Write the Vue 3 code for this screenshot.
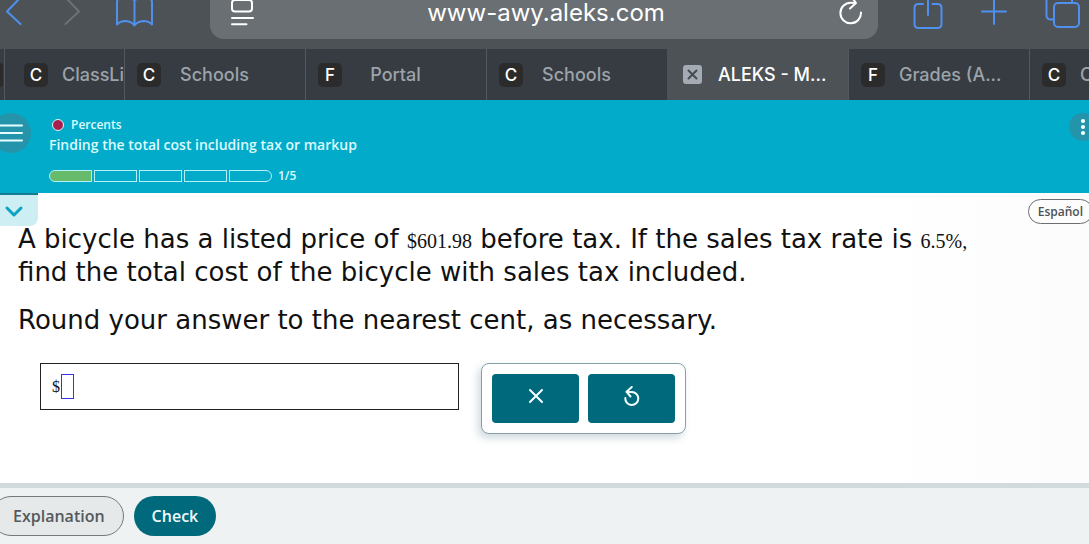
<script setup>
import { ref } from 'vue'

const tabs = [
  { letter: 'C', title: 'ClassLi', kind: 'clipped' },
  { letter: 'C', title: 'Schools', kind: 'centered' },
  { letter: 'F', title: 'Portal', kind: 'centered' },
  { letter: 'C', title: 'Schools', kind: 'centered' },
  { letter: '', title: 'ALEKS - M...', kind: 'active' },
  { letter: 'F', title: 'Grades (A...', kind: 'left' },
  { letter: 'C', title: 'C', kind: 'left' }
]
const total = 5
const done = 1
const answer = ref('')
</script>

<template>
  <div class="page">
    <div class="toolbar">
      <div class="nav">
        <button class="tool" aria-label="Back">
          <svg width="30" height="40" viewBox="0 0 30 40"><path d="M21-3 7 11.500 20.500 24" class="blue" /></svg>
        </button>
        <button class="tool" aria-label="Forward" disabled>
          <svg width="30" height="40" viewBox="0 0 30 40"><path d="M8-3 22 11.500 8.500 24" class="dim" /></svg>
        </button>
        <button class="tool book" aria-label="Bookmarks">
          <svg width="40" height="40" viewBox="0 0 40 40"><path d="M3 24.500V2Q3-2 8-2q8 0 12.500 2Q25-2 31-2q7 0 7 4v22.500Q35 21 29.500 21 23 21.500 20.500 25.500 18 21.500 11.500 21 6 21 3 24.500ZM20.500 0v25" class="blue" /></svg>
        </button>
      </div>
      <div class="address">
        <button class="tool" aria-label="Page settings">
          <svg width="24" height="30" viewBox="0 0 24 30"><rect x="2" y="0" width="20" height="11.500" rx="3" class="white" /><path d="M2 18h21M2 24.200h14.500" class="white" /></svg>
        </button>
        <span class="url">www-awy.aleks.com</span>
        <button class="tool" aria-label="Reload">
          <svg width="26" height="30" viewBox="0 0 26 30"><path d="M23 12.500A10.300 10.300 0 1 1 12.700 2.700q2.500 0 5 .3M12 8.500 18 3 13.500-3" class="white" /></svg>
        </button>
      </div>
      <div class="actions">
        <button class="tool" aria-label="Share">
          <svg width="32" height="40" viewBox="0 0 32 40"><path d="M11 4H6.500Q2.500 4 2.500 8V24Q2.500 28 6.500 28H25.500Q29.500 28 29.500 24V8Q29.500 4 25.500 4H20.500M16-4V15" class="blue" /></svg>
        </button>
        <button class="tool" aria-label="New tab">
          <svg width="32" height="40" viewBox="0 0 32 40"><path d="M4 11.500h24M16-2v26" class="blue" /></svg>
        </button>
        <button class="tool last" aria-label="Tab overview">
          <svg width="40" height="40" viewBox="0 0 40 40"><rect x="10" y="3" width="25" height="24" rx="4" class="blue" /><path d="M2.500-4V15.500Q2.500 19 6.500 19.500H9M28 2V-2" class="blue" /></svg>
        </button>
      </div>
    </div>

    <nav class="tabs" aria-label="Open tabs">
      <div class="stub"><span></span></div>
      <a v-for="(t, i) in tabs" :key="i" href="#" class="tab" :class="t.kind">
        <span v-if="t.letter" class="favicon">{{ t.letter }}</span>
        <svg v-else class="close" width="19" height="19" viewBox="0 0 19 19"><rect width="19" height="19" rx="3" fill="#a4abb4" /><path d="M5.500 5.500l8 8M13.500 5.500l-8 8" stroke="#454b51" stroke-width="2" stroke-linecap="round" /></svg>
        <span class="title">{{ t.title }}</span>
      </a>
    </nav>

    <header class="head">
      <button class="round menu" aria-label="Menu">
        <svg width="40" height="40" viewBox="0 0 40 40"><path d="M8 12.500h23M8 20h23M8 27.500h23" stroke="#e9ffff" stroke-width="2" stroke-linecap="round" /></svg>
      </button>
      <div class="topic">
        <div class="category"><span class="dot"></span>Percents</div>
        <h1>Finding the total cost including tax or markup</h1>
        <div class="progress">
          <span v-for="n in total" :key="n" class="seg" :class="{ filled: n <= done }"></span>
          <span class="count">{{ done }}/{{ total }}</span>
        </div>
      </div>
      <button class="round more" aria-label="More options">
        <svg width="28" height="28" viewBox="0 0 28 28" fill="#f2ffff"><circle cx="14" cy="8" r="2.100" /><circle cx="14" cy="14" r="2.100" /><circle cx="14" cy="20" r="2.100" /></svg>
      </button>
    </header>

    <main>
      <div class="strip">
        <button class="expand" aria-label="Expand">
          <svg width="20" height="14" viewBox="0 0 20 14"><path d="M3 4 10 11 17 4" fill="none" stroke="#0ba3bf" stroke-width="3" stroke-linecap="round" stroke-linejoin="round" /></svg>
        </button>
        <button class="lang">Español</button>
      </div>
      <div class="question">
        <p>A bicycle has a listed price of <span class="num">$601.98</span> before tax. If the sales tax rate is <span class="num">6.5%,</span><br />find the total cost of the bicycle with sales tax included.</p>
        <p>Round your answer to the nearest cent, as necessary.</p>
        <div class="work">
          <div class="answer">
            <label for="amount">$</label><input id="amount" v-model="answer" type="text" inputmode="decimal" />
          </div>
          <div class="pad">
            <button aria-label="Clear">
              <svg width="16" height="16" viewBox="0 0 16 16"><path d="M2 2l12 12M14 2 2 14" class="key" /></svg>
            </button>
            <button aria-label="Undo">
              <svg width="20" height="22" viewBox="0 0 20 22"><path d="M3.300 13A6.500 6.500 0 1 0 9.800 7H4.500M9.800 2 4.500 6.700 8.500 11.500" class="key" /></svg>
            </button>
          </div>
        </div>
      </div>
    </main>

    <footer>
      <button class="explain">Explanation</button>
      <button class="check">Check</button>
    </footer>
  </div>
</template>

<style>
body {
  margin: 0;
  overflow-x: hidden;
}
</style>

<style scoped>
* {
  box-sizing: border-box;
}
.page {
  min-height: 100vh;
  display: flex;
  flex-direction: column;
  overflow: hidden;
  background: #fff;
  font-family: "Open Sans", "Noto Sans", sans-serif;
}
button {
  margin: 0;
  padding: 0;
  border: 0;
  background: none;
  font: inherit;
  color: inherit;
}
svg {
  display: block;
}
.toolbar {
  height: 49px;
  flex: none;
  display: flex;
  align-items: flex-start;
  background: #4d5256;
}
.tool {
  flex: none;
}
.blue,
.dim,
.white,
.key {
  fill: none;
  stroke: #4f90ee;
  stroke-width: 2;
  stroke-linecap: round;
  stroke-linejoin: round;
}
.dim {
  stroke: #6b7175;
}
.white {
  stroke: #fff;
}
.key {
  stroke: #f4ffff;
}
.nav {
  width: 210px;
  flex: none;
  display: flex;
  gap: 27px;
}
.address {
  flex: 1;
  height: 39px;
  padding: 0 14px 0 20px;
  display: flex;
  align-items: flex-start;
  justify-content: space-between;
  background: #6a6f73;
  border-radius: 0 0 14px 14px;
}
.url {
  color: #fff;
  font: 24px/26px Inter, sans-serif;
}
.actions {
  width: 211px;
  flex: none;
  padding-left: 34px;
  display: flex;
  gap: 34px;
}
.tabs {
  height: 51px;
  flex: none;
  display: grid;
  grid-template-columns: 4px 120px repeat(5, minmax(0, 1fr)) 60px;
  background: #363c41;
}
.stub {
  display: flex;
  align-items: center;
}
.stub span {
  width: 3px;
  height: 24px;
  border-radius: 0 5px 5px 0;
  background: #2b2b2c;
}
.tab {
  min-width: 0;
  display: flex;
  align-items: center;
  overflow: hidden;
  padding-left: 12px;
  border-left: 1px solid #52585d;
  color: #9da3aa;
  text-decoration: none;
  font: 500 18px/24px Inter, sans-serif;
}
.tab.clipped {
  padding-left: 19px;
}
.favicon {
  width: 24px;
  height: 24px;
  flex: none;
  border-radius: 5px;
  background: #2b2b2c;
  color: #fff;
  text-align: center;
  font-size: 17px;
}
.title {
  margin-left: 14px;
  white-space: nowrap;
}
.centered .title {
  flex: 1;
  margin: 0 37px 0 0;
  text-align: center;
}
.tab.active {
  padding-left: 15px;
  background: #4d5256;
  border-color: #4d5256;
  color: #fff;
}
.close {
  flex: none;
}
.active .title {
  margin-left: 16px;
}
.head {
  flex: none;
  display: flex;
  align-items: flex-start;
  padding: 13px 0 9px;
  background: #03abca;
  color: #dcfbff;
}
.round {
  flex: none;
  border-radius: 50%;
  background: #2494ab;
}
.menu {
  margin-left: -9px;
}
.more {
  margin-right: -8px;
}
.topic {
  flex: 1;
  padding: 2px 0 0 18px;
}
.category {
  display: flex;
  align-items: center;
  gap: 7px;
  padding-left: 3px;
  font-size: 12px;
  line-height: 20px;
  font-weight: 600;
}
.dot {
  width: 12px;
  height: 12px;
  border: 1px solid #dcfbff;
  border-radius: 50%;
  background: #a91e4e;
}
h1 {
  margin: 0;
  font-size: 14px;
  line-height: 20px;
  font-weight: 600;
}
.progress {
  display: flex;
  align-items: center;
  gap: 2px;
  margin-top: 13px;
}
.seg {
  width: 43px;
  height: 12px;
  border: 1px solid #b5f0f8;
}
.seg:first-child {
  border-radius: 6px 0 0 6px;
}
.seg:nth-child(5) {
  border-radius: 0 6px 6px 0;
}
.filled {
  background: #66bb6a;
}
.count {
  margin-left: 4px;
  font-size: 12px;
  line-height: 16px;
  font-weight: 600;
}
main {
  flex: 1;
  background: linear-gradient(90deg, #fff 80%, #fcfcfc);
}
.strip {
  height: 30px;
  display: flex;
  align-items: flex-start;
  justify-content: space-between;
}
.expand {
  width: 38px;
  height: 33px;
  padding: 0 0 0 4px;
  border-top: 2px solid #127d93;
  border-radius: 0 0 8px 0;
  background: #cdeef3;
}
.lang {
  height: 25px;
  margin: 6px -4px 0 0;
  padding: 0 9px;
  border: 1px solid #6b6f72;
  border-radius: 13px;
  color: #4d5154;
  font-size: 12px;
  font-weight: 600;
}
.question {
  padding: 0 18px;
  color: #111;
}
p {
  margin: 0 0 15px;
  font: 26px/33px Verdana, "DejaVu Sans", sans-serif;
}
.num {
  font: 20px/20px "Liberation Serif", serif;
}
.work {
  display: flex;
  align-items: flex-start;
  gap: 22px;
  margin: 26px 0 20px 22px;
}
.answer {
  width: 419px;
  height: 47px;
  display: flex;
  align-items: center;
  padding-left: 11px;
  border: 1px solid #222;
  font: 16px/24px "Liberation Serif", serif;
}
.answer input {
  width: 13px;
  height: 25px;
  margin-left: 1px;
  padding: 0;
  border: 1px solid #3a30e8;
  border-radius: 0;
  background: #fff;
  font: inherit;
  outline: none;
}
.pad {
  display: flex;
  gap: 9px;
  padding: 10px;
  border: 1px solid #86a0a8;
  border-radius: 8px;
  background: #fff;
  box-shadow: -3px 4px 8px #cfd9df;
}
.pad button {
  width: 87px;
  height: 49px;
  display: flex;
  align-items: center;
  justify-content: center;
  border-radius: 4px;
  background: #00697c;
  padding-bottom: 5px;
}
footer {
  flex: none;
  display: flex;
  gap: 10px;
  padding: 8px 0;
  border-top: 5px solid #d3dadd;
  background: #eef2f3;
}
footer button {
  height: 40px;
  border-radius: 20px;
  font-size: 16px;
  font-weight: 600;
}
.explain {
  margin-left: -9px;
  padding: 0 18px 0 21px;
  border: 1px solid #74797c;
  background: #e5e9ea;
  color: #54595c;
}
.check {
  padding: 0 18px;
  background: #00697c;
  color: #effcff;
}
</style>
